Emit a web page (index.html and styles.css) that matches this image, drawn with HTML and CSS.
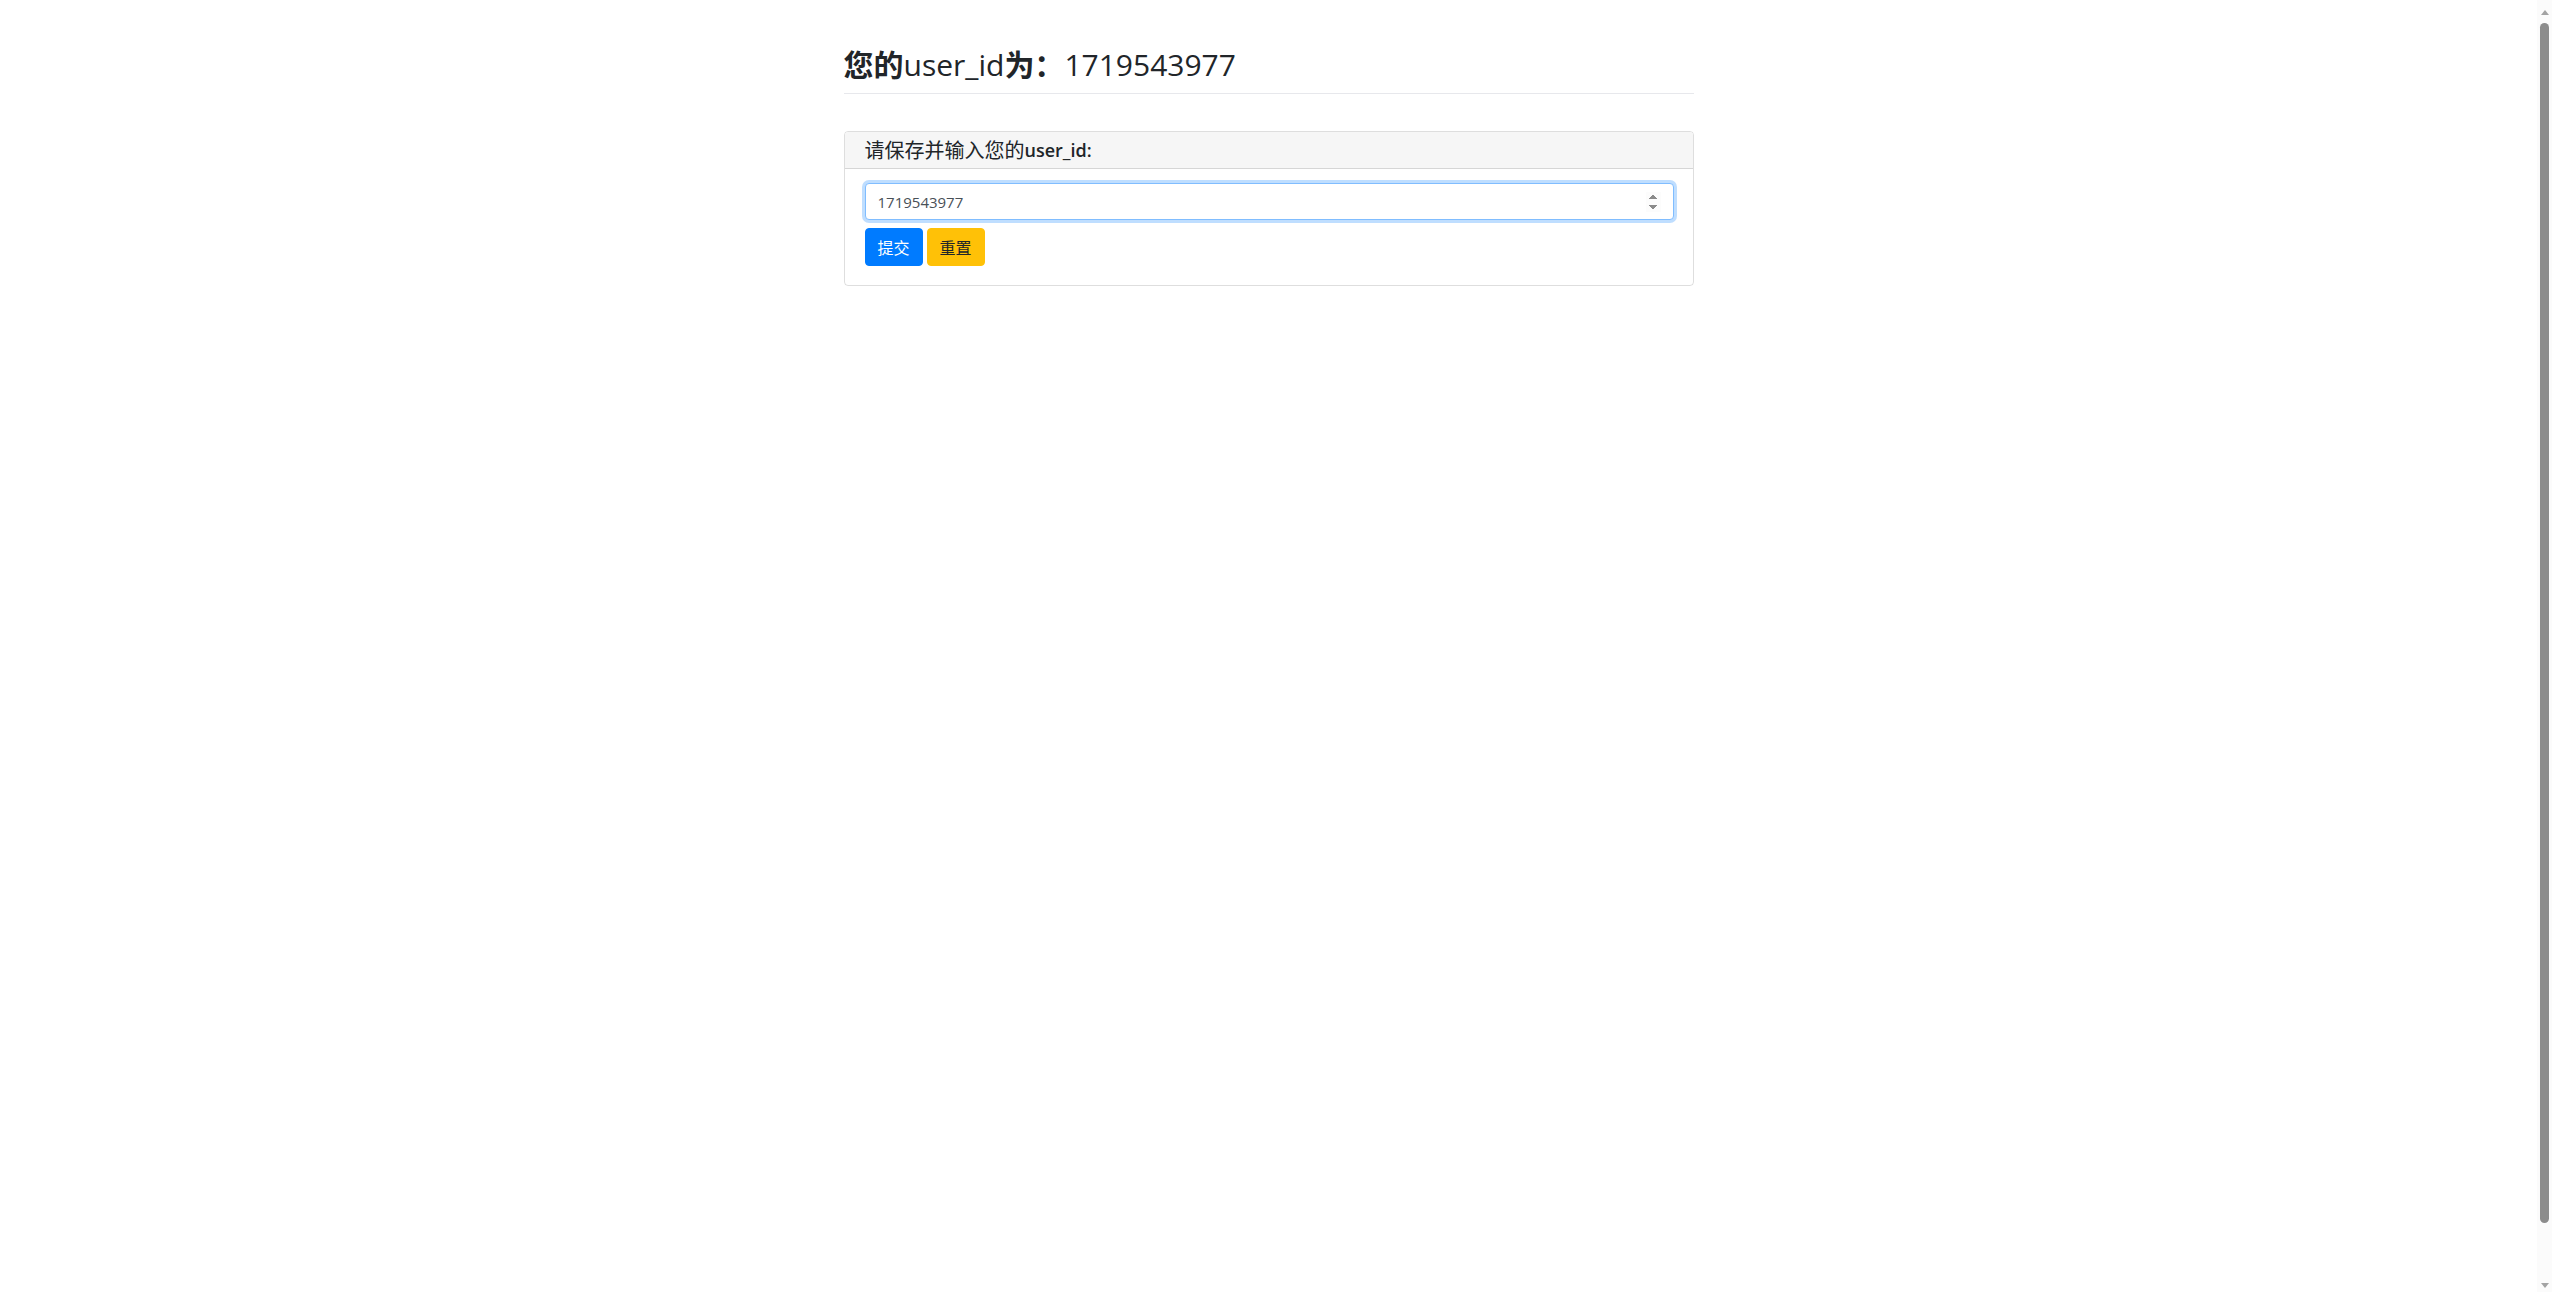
FILE: index.html
```html
<!DOCTYPE html>
<html lang="zh-CN">
<head>
<meta charset="utf-8">
<title>user_id</title>
<link rel="stylesheet" href="styles.css">
</head>
<body>
<div class="viewport">
  <main class="main">
    <div class="container">
      <h2 class="title"><span class="cjk-bold">您的</span>user_id<span class="cjk-bold">为：</span>1719543977</h2>
      <div class="card">
        <div class="card-header">请保存并输入您的<span class="bold">user_id:</span></div>
        <div class="card-body">
          <form class="form">
            <input class="form-control is-focused" type="number" value="1719543977" autofocus>
            <div class="actions">
              <button type="button" class="btn btn-primary">提交</button>
              <button type="reset" class="btn btn-warning">重置</button>
            </div>
          </form>
        </div>
      </div>
    </div>
  </main>
  <div class="scrollbar" aria-hidden="true">
    <div class="arrow arrow-up"></div>
    <div class="thumb"></div>
    <div class="track-rest"></div>
    <div class="arrow arrow-down"></div>
  </div>
</div>
</body>
</html>
```

FILE: styles.css
```css
html, body {
  margin: 0;
  padding: 0;
  background: #fff;
}
body {
  font-family: "Open Sans", "Noto Sans CJK SC", sans-serif;
  color: #212529;
  font-size: 16px;
  line-height: 1.5;
}
.viewport {
  display: flex;
  height: 100vh;
  overflow: hidden;
}
.main {
  flex: 1;
  min-width: 0;
}
.container {
  width: 850px;
  margin: 0 auto;
}
.title {
  margin: 46px 0 37px;
  padding-bottom: 9px;
  border-bottom: 1px solid #e7e8ec;
  font-size: 30px;
  line-height: 38px;
  font-weight: 500;
  color: #212529;
}
.cjk-bold {
  font-weight: 700;
}
.bold {
  font-weight: 600;
  font-size: 18px;
  line-height: 1;
}
.card {
  border: 1px solid rgba(0, 0, 0, 0.13);
  border-radius: 4px;
  overflow: hidden;
}
.card-header {
  box-sizing: border-box;
  height: 37px;
  display: flex;
  align-items: center;
  background: #f6f6f6;
  border-bottom: 1px solid rgba(0, 0, 0, 0.13);
  padding: 0 21px 0 20px;
  font-family: "Open Sans", "Noto Sans CJK SC", sans-serif;
  font-size: 20px;
  line-height: 25px;
  white-space: pre;
}
.card-body {
  padding: 14px 19px 19px 20px;
}
.form {
  display: flex;
  flex-direction: column;
  gap: 8px;
}
.form-control {
  display: block;
  box-sizing: border-box;
  width: 100%;
  height: 37px;
  margin: 0;
  padding: 4px 12px;
  font-family: "Open Sans", "Noto Sans CJK SC", sans-serif;
  font-size: 15px;
  color: #495057;
  background: #fff;
  border: 1px solid #ced4da;
  border-radius: 4px;
  outline: none;
}
.form-control.is-focused,
.form-control:focus {
  border-color: #80bdff;
  box-shadow: 0 0 0 3px rgba(0, 123, 255, 0.25);
}
.actions {
  display: flex;
  gap: 4px;
}
.btn {
  box-sizing: border-box;
  height: 38px;
  padding: 6px 12px;
  font-family: "Noto Sans CJK SC", sans-serif;
  font-size: 16px;
  line-height: 24px;
  border: 1px solid transparent;
  border-radius: 4px;
  cursor: pointer;
}
.btn-primary {
  background: #007bff;
  border-color: #007bff;
  color: #fff;
}
.btn-warning {
  background: #ffc107;
  border-color: #ffc107;
  color: #212529;
}
.scrollbar {
  width: 15px;
  flex: none;
  background: #fbfbfb;
  display: flex;
  flex-direction: column;
  align-items: center;
  padding: 10px 0 4px;
  box-sizing: border-box;
}
.arrow {
  width: 0;
  height: 0;
  border-left: 4px solid transparent;
  border-right: 4px solid transparent;
}
.arrow-up {
  border-bottom: 5px solid #a3a3a3;
}
.arrow-down {
  border-top: 5px solid #a3a3a3;
}
.thumb {
  margin-top: 8px;
  width: 9px;
  height: 1200px;
  border-radius: 5px;
  background: #8c8c8c;
}
.track-rest {
  flex: 1;
}
```
